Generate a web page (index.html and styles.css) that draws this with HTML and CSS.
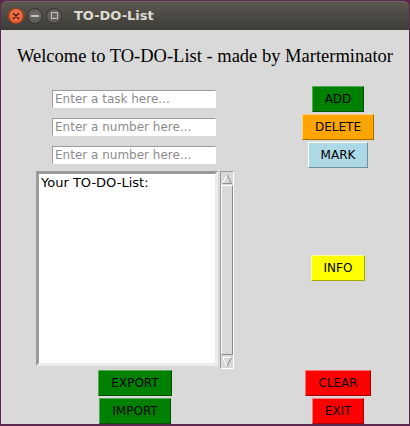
FILE: index.html
```html
<!DOCTYPE html>
<html lang="en">
<head>
<meta charset="utf-8">
<title>TO-DO-List</title>
<link rel="stylesheet" href="styles.css">
</head>
<body>
<div class="window">
  <div class="titlebar">
    <div class="controls">
      <span class="ctl close">
        <svg width="8" height="8" viewBox="0 0 8 8"><path d="M1.5 1.5 L6.5 6.5 M6.5 1.5 L1.5 6.5" stroke="#3a1508" stroke-width="1.4" stroke-linecap="round"/></svg>
      </span>
      <span class="ctl min"><span class="min-bar"></span></span>
      <span class="ctl max"><span class="max-box"></span></span>
    </div>
    <span class="title">TO-DO-List</span>
  </div>
  <div class="content">
    <h1 class="heading">Welcome to TO-DO-List - made by Marterminator</h1>
    <div class="grid">
      <div class="entries">
        <input class="entry" type="text" placeholder="Enter a task here...">
        <input class="entry" type="text" placeholder="Enter a number here...">
        <input class="entry" type="text" placeholder="Enter a number here...">
      </div>
      <div class="actions">
        <button class="btn green">ADD</button>
        <button class="btn orange">DELETE</button>
        <button class="btn blue">MARK</button>
      </div>
      <div class="listwrap">
        <div class="listbox">Your TO-DO-List:</div>
        <div class="scrollbar">
          <div class="arrow">
            <svg width="12" height="12" viewBox="0 0 12 12"><path d="M1.5 10.5 L6 1.5" stroke="#ffffff" stroke-width="1" fill="none"/><path d="M6 1.5 L10.5 10.5 L1.5 10.5" stroke="#8a8a8a" stroke-width="1" fill="none"/></svg>
          </div>
          <div class="slider"></div>
          <div class="arrow">
            <svg width="12" height="12" viewBox="0 0 12 12"><path d="M1.5 1.5 L10.5 1.5 M1.5 1.5 L6 10.5" stroke="#ffffff" stroke-width="1" fill="none"/><path d="M6 10.5 L10.5 1.5" stroke="#8a8a8a" stroke-width="1" fill="none"/></svg>
          </div>
        </div>
      </div>
      <div class="info-cell">
        <button class="btn yellow">INFO</button>
      </div>
      <div class="cell row-c"><button class="btn green">EXPORT</button></div>
      <div class="cell row-c"><button class="btn red">CLEAR</button></div>
      <div class="cell row-d"><button class="btn green">IMPORT</button></div>
      <div class="cell row-d"><button class="btn red">EXIT</button></div>
    </div>
  </div>
</div>
</body>
</html>
```
FILE: styles.css
```css
* { box-sizing: border-box; }

html, body {
  margin: 0;
  padding: 0;
  background: #5e2750;
}

.window {
  width: 410px;
  height: 426px;
  display: flex;
  flex-direction: column;
  background: #5e2750;
  overflow: hidden;
}

.titlebar {
  height: 29px;
  flex: none;
  display: flex;
  align-items: center;
  margin: 1px 1px 0 1px;
  border-radius: 6px 6px 0 0;
  background: linear-gradient(#5b5850, #3d3c37);
  box-shadow: inset 0 1px 0 #6b675e;
}

.controls {
  display: flex;
  gap: 3px;
  margin-left: 7px;
}

.ctl {
  width: 16px;
  height: 16px;
  border-radius: 50%;
  display: flex;
  align-items: center;
  justify-content: center;
}

.close {
  background: radial-gradient(circle at 50% 40%, #f37d53, #df4f22);
  border: 1px solid #a53b17;
}

.min, .max {
  background: radial-gradient(circle at 50% 40%, #6e6c65, #55534d);
  border: 1px solid #34332f;
}

.min-bar {
  width: 8px;
  height: 2px;
  background: #c2bfb6;
}

.max-box {
  width: 7px;
  height: 7px;
  border: 1px solid #c2bfb6;
}

.title {
  margin-left: 12px;
  font-family: "DejaVu Sans", sans-serif;
  font-weight: bold;
  font-size: 13px;
  color: #dfdbd2;
}

.content {
  flex: 1;
  margin: 0 1px 2px 1px;
  background: #d9d9d9;
  padding-left: 35px;
}

.heading {
  margin: 14px 0 0 -35px;
  font-family: "Liberation Serif", "Times New Roman", serif;
  font-weight: normal;
  font-size: 18.5px;
  line-height: 24px;
  text-align: center;
  color: #000;
}

.grid {
  margin-top: 18px;
  display: grid;
  grid-template-columns: 198px 100px;
  column-gap: 54px;
}

.entries {
  padding-top: 4px;
  display: flex;
  flex-direction: column;
  align-items: center;
  gap: 10px;
}

.entry {
  width: 164px;
  height: 18px;
  margin: 0 2px 0 0;
  padding: 0 2px;
  border: 1px solid;
  border-color: #9c9c9c #ffffff #ffffff #9c9c9c;
  background: #fff;
  font-family: "DejaVu Sans", sans-serif;
  font-size: 12px;
  color: #000;
  outline: none;
}

.entry::placeholder {
  color: #8c8c8c;
  opacity: 1;
}

.actions {
  display: flex;
  flex-direction: column;
  align-items: center;
  gap: 2px;
}

.btn {
  height: 26px;
  margin: 0;
  padding: 0 12px;
  border: 1px solid;
  font-family: "DejaVu Sans", sans-serif;
  font-size: 12px;
  line-height: 14px;
  color: #000;
  cursor: pointer;
}

.green  { background: #008000; border-color: #55aa55 #005000 #005000 #55aa55; }
.orange { background: #ffa500; border-color: #ffd27a #a86d00 #a86d00 #ffd27a; }
.blue   { background: #add8e6; border-color: #ffffff #72909a #72909a #ffffff; }
.yellow { background: #ffff00; border-color: #ffff99 #a8a800 #a8a800 #ffff99; }
.red    { background: #ff0000; border-color: #ff7070 #a80000 #a80000 #ff7070; }

.listwrap {
  margin-top: 3px;
  display: flex;
  align-items: flex-start;
  gap: 2px;
}

.listbox {
  width: 182px;
  height: 195px;
  border: 3px solid;
  border-color: #9a9a9a #ececec #ececec #9a9a9a;
  background: #fff;
  padding: 1px 2px;
  font-family: "DejaVu Sans", sans-serif;
  font-size: 13px;
  line-height: 16px;
  color: #000;
}

.scrollbar {
  width: 14px;
  height: 198px;
  display: flex;
  flex-direction: column;
  border: 1px solid;
  border-color: #9a9a9a #ffffff #ffffff #9a9a9a;
  background: #d9d9d9;
}

.arrow {
  height: 13px;
  flex: none;
  display: flex;
  align-items: center;
  justify-content: center;
}

.slider {
  flex: 1;
  border: 1px solid;
  border-color: #ffffff #8a8a8a #8a8a8a #ffffff;
  background: #d9d9d9;
}

.info-cell {
  margin-top: 3px;
  display: flex;
  align-items: center;
  justify-content: center;
  padding-bottom: 4px;
}

.cell {
  display: flex;
  justify-content: center;
}

.row-c { margin-top: 1px; }
.row-d { margin-top: 2px; }
```
